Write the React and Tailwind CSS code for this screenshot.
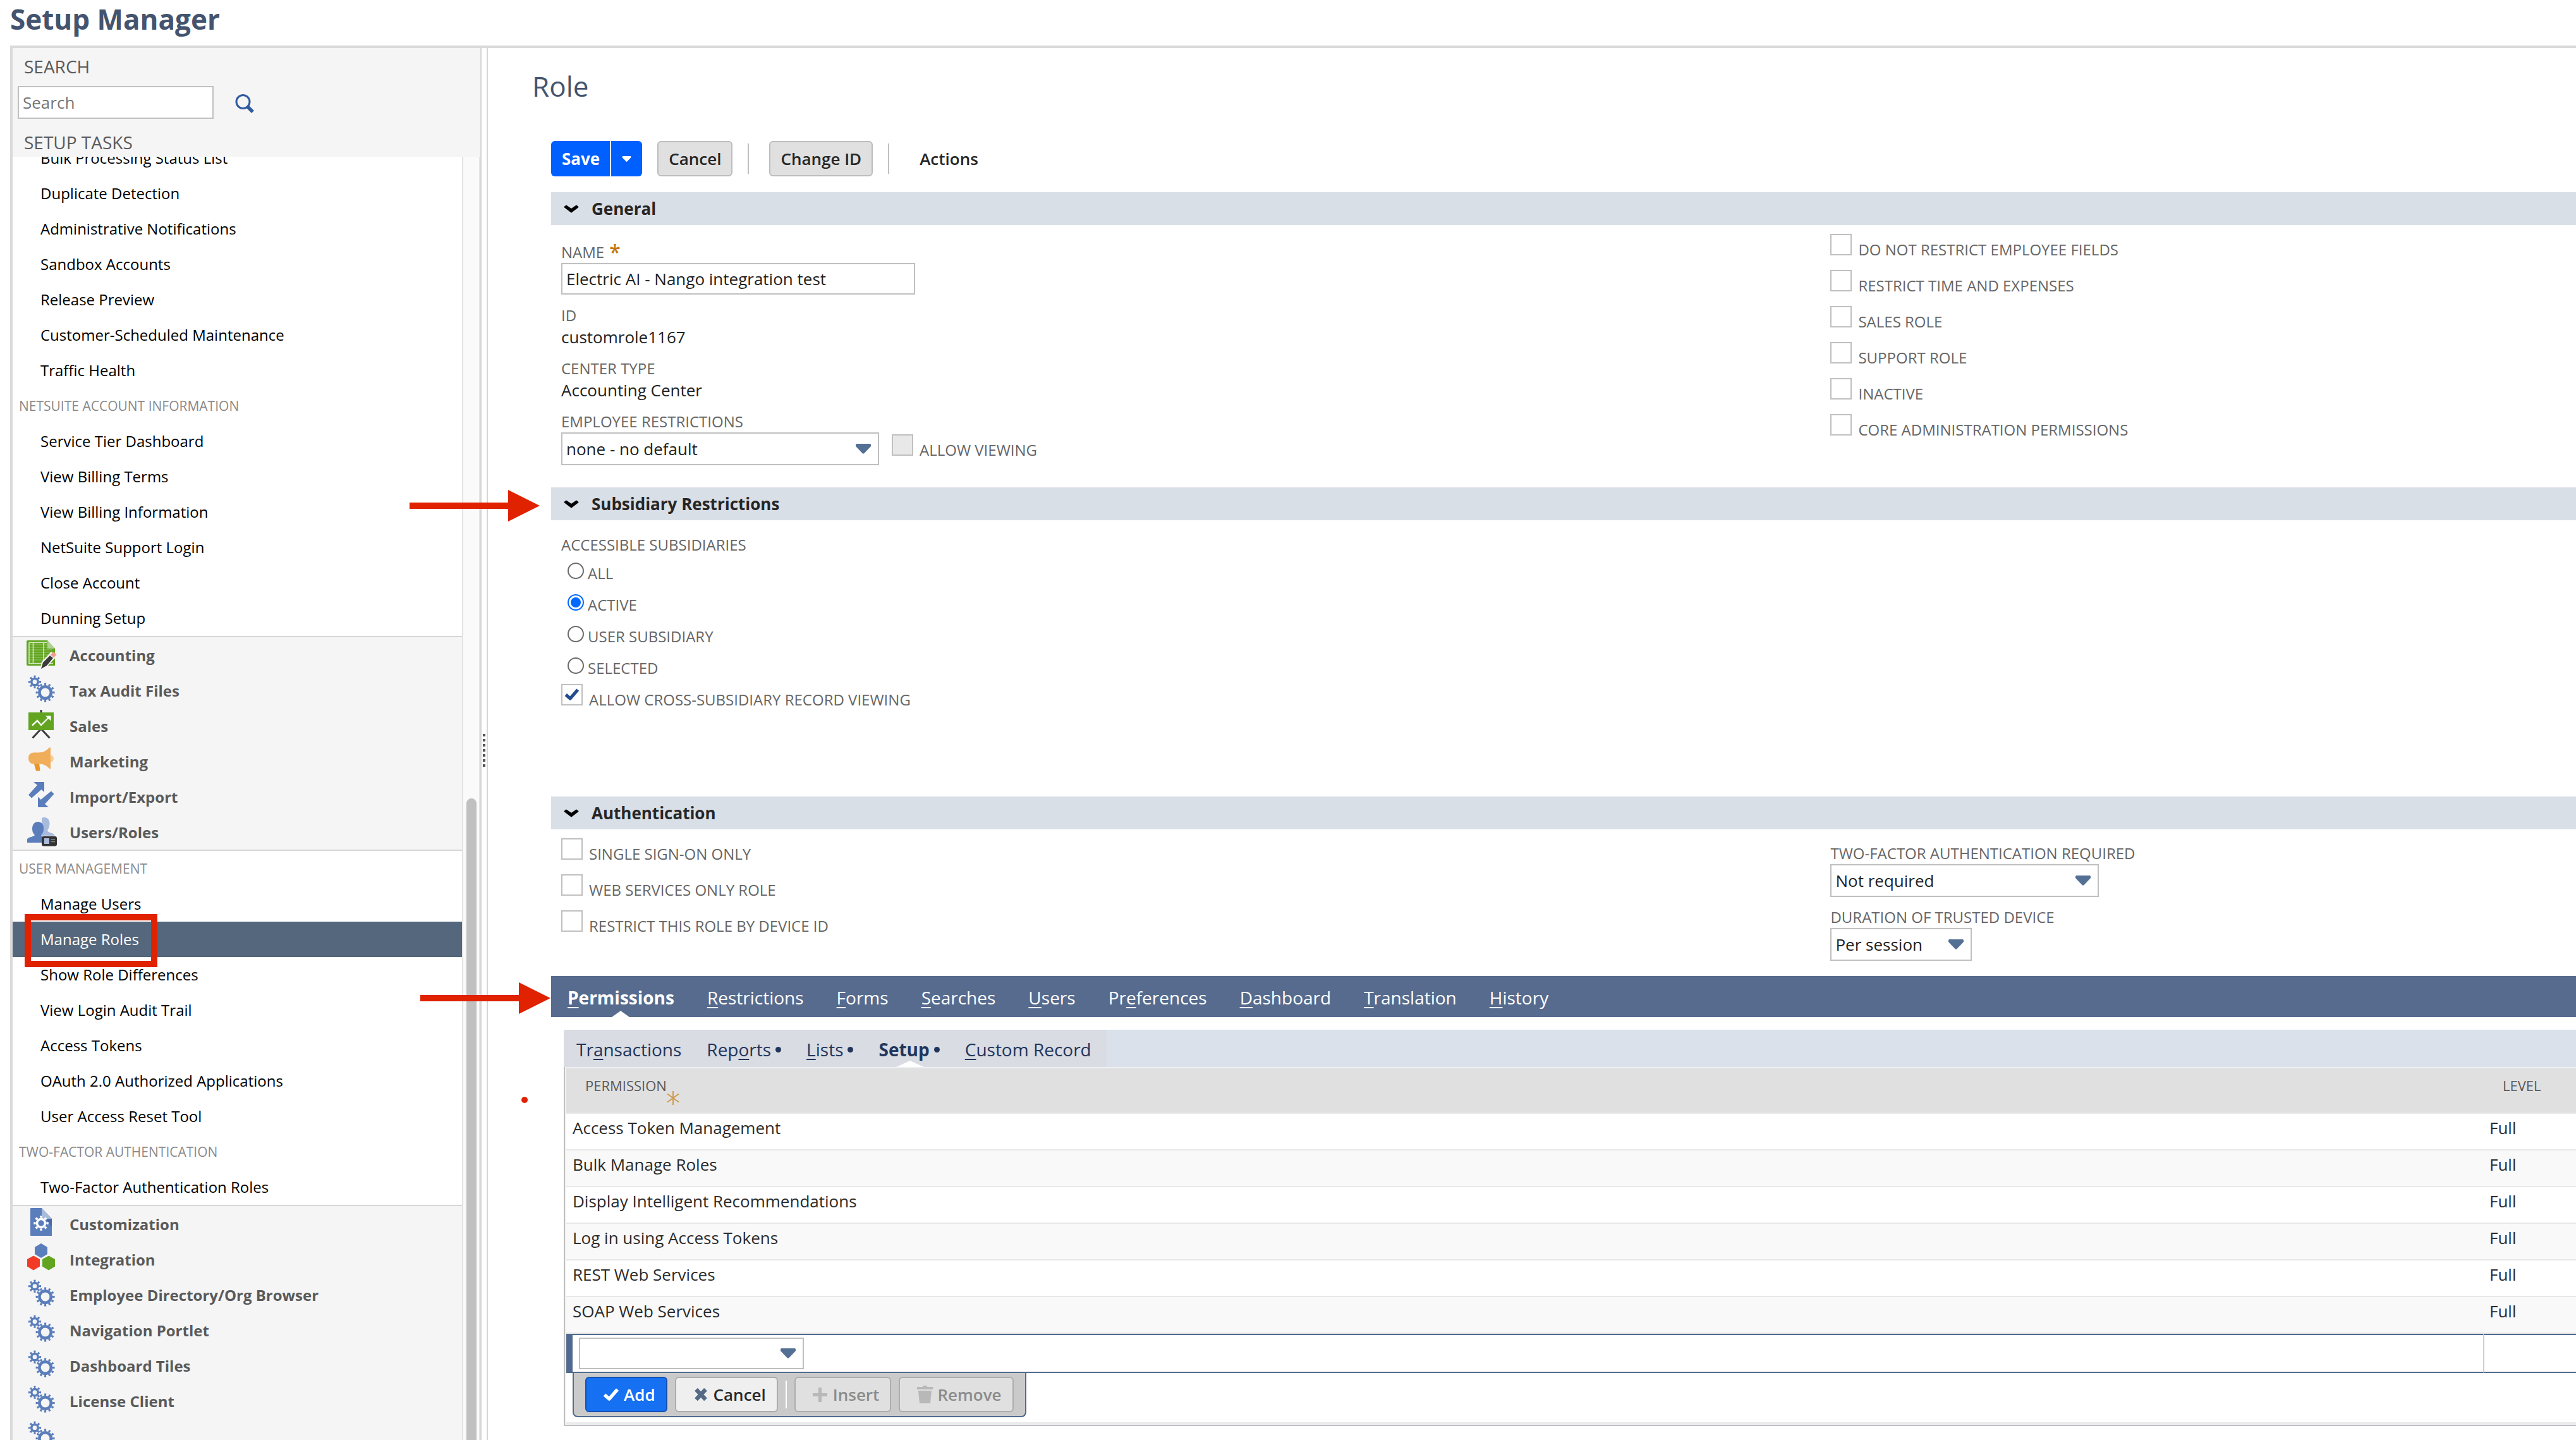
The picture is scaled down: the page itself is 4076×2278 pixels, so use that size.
import { useState } from "react";
import clsx from "clsx";

const accountLinks = [
  "Bulk Processing Status List",
  "Duplicate Detection",
  "Administrative Notifications",
  "Sandbox Accounts",
  "Release Preview",
  "Customer-Scheduled Maintenance",
  "Traffic Health",
];

const netsuiteLinks = [
  "Service Tier Dashboard",
  "View Billing Terms",
  "View Billing Information",
  "NetSuite Support Login",
  "Close Account",
  "Dunning Setup",
];

const userLinks = [
  "Manage Users",
  "Manage Roles",
  "Show Role Differences",
  "View Login Audit Trail",
  "Access Tokens",
  "OAuth 2.0 Authorized Applications",
  "User Access Reset Tool",
];

const mainTabs = [
  ["", "P", "ermissions"],
  ["", "R", "estrictions"],
  ["", "F", "orms"],
  ["", "S", "earches"],
  ["", "U", "sers"],
  ["Pr", "e", "ferences"],
  ["", "D", "ashboard"],
  ["", "T", "ranslation"],
  ["", "H", "istory"],
];

const subTabs = [
  { text: ["Tr", "a", "nsactions"] },
  { text: ["Rep", "o", "rts"], dot: true },
  { text: ["", "L", "ists"], dot: true },
  { text: ["Setup", "", ""], dot: true, active: true },
  { text: ["", "C", "ustom Record"] },
];

const permissions = [
  "Access Token Management",
  "Bulk Manage Roles",
  "Display Intelligent Recommendations",
  "Log in using Access Tokens",
  "REST Web Services",
  "SOAP Web Services",
];

const roleFlags = [
  "DO NOT RESTRICT EMPLOYEE FIELDS",
  "RESTRICT TIME AND EXPENSES",
  "SALES ROLE",
  "SUPPORT ROLE",
  "INACTIVE",
  "CORE ADMINISTRATION PERMISSIONS",
];

/* Sidebar icons */

function GearsIcon() {
  return (
    <svg viewBox="0 0 48 48" className="size-12" fill="none" stroke="#5a7dbb">
      <circle cx="14" cy="12.7" r="5.2" strokeWidth="3.6" />
      <circle
        cx="14"
        cy="12.7"
        r="8.4"
        strokeWidth="3.4"
        pathLength="16"
        strokeDasharray="0.9 1.1"
        strokeDashoffset="0.45"
      />
      <circle cx="30.6" cy="29.5" r="9.2" strokeWidth="4.6" />
      <circle
        cx="30.6"
        cy="29.5"
        r="13.2"
        strokeWidth="3.6"
        pathLength="24"
        strokeDasharray="0.9 1.1"
        strokeDashoffset="0.45"
      />
    </svg>
  );
}

function AccountingIcon() {
  return (
    <svg viewBox="0 0 48 48" className="size-12 overflow-visible" fill="none">
      <path d="M3 3H34L46 16V43H3Q1 43 1 41V5Q1 3 3 3Z" fill="#62a420" />
      <path d="M34 3L46 16H34Z" fill="#b1d290" />
      <path
        d="M5 10H34M5 14H34M5 18H42M5 22H42M5 26H42M5 30H42M5 34H38"
        stroke="#86b955"
        strokeWidth="1.5"
      />
      <path d="M5 6.5H33M5 6.5V39.5H43M11.5 6.5V39.5M28 6.5V39.5" stroke="#d3e6c1" strokeWidth="1.6" />
      <path d="M22.500 49L25 37L40 21L49 28L33 45Z" fill="#f5f5f5" />
      <path d="M24 48L27 38L38 27L43 31L33 43Z" fill="#3b3b3b" />
      <path d="M39 26L43.5 21L48.5 25.5L44 30.5Z" fill="#f79a8b" />
    </svg>
  );
}

function SalesIcon() {
  return (
    <svg viewBox="0 0 48 48" className="size-12" fill="none">
      <path d="M24 1V6M23 32L10.5 45.5M25 32L37.5 45.5" stroke="#3b3b3b" strokeWidth="3" />
      <path d="M4 5H44V33H4Z" fill="#62a420" />
      <path d="M10 25.5L18 18L24 25L36 13" stroke="#fff" strokeWidth="2.4" />
      <path d="M31 10.5H39.5V18.5Z" fill="#fff" />
    </svg>
  );
}

function MarketingIcon() {
  return (
    <svg viewBox="0 0 48 48" className="size-12">
      <path d="M39 16.5Q44 17 44 22T39 27.5Z" fill="#f7cf95" />
      <path d="M12.5 29H21L22.5 41.5H16Z" fill="#e8962a" />
      <path
        d="M12 12.5H20C28 12.5 33 9 37 4.5H39V38H37C33 33 28 30.5 20 30.5H12Q4 30 4 21.5T12 12.5Z"
        fill="#f0ae5a"
      />
    </svg>
  );
}

function ImportExportIcon() {
  return (
    <svg viewBox="0 0 48 48" className="size-12" fill="#5a7dbb">
      <path d="M12 3H29V19L24.5 15L9 28.5L4 23.5L18 8Z" />
      <path d="M19 26.5L23.5 31L40 17.5L44.5 22L30 38L36 43H19Z" />
    </svg>
  );
}

function UsersIcon() {
  return (
    <svg viewBox="0 0 48 48" className="size-12 overflow-visible">
      <path
        d="M29 3C35 3 38 8 37.5 14C37 19 35 22 34 24C35 28 45 27 45.500 32H25V4Q27 3 29 3Z"
        fill="#a8bbdc"
      />
      <path
        d="M19 10C25 10 28.500 15 28 21C28 26 26 29 24.500 31V33L33 35V43H2V38C2 34 13 34 14 31C11 28 10 25 10 21C10 15 13 10 19 10Z"
        fill="#5a7dbb"
      />
      <rect x="25" y="33" width="24" height="15.500" rx="3" fill="#333" />
      <rect x="29" y="36" width="8" height="9" fill="#a8bbdc" />
      <path d="M39.500 38H46M39.500 41.500H46" stroke="#888" strokeWidth="1.500" />
    </svg>
  );
}

function CustomizationIcon() {
  return (
    <svg viewBox="0 0 48 48" className="size-12" fill="none">
      <path d="M8 1H25L41 18V45H8Q7 45 7 44V2Q7 1 8 1Z" fill="#5a7dbb" />
      <path d="M25 1L41 18H25Z" fill="#a8bbdc" />
      <path d="M32 18H41V31Z" fill="#4a69a3" />
      <circle cx="24" cy="25" r="6.500" stroke="#fff" strokeWidth="3.500" />
      <circle
        cx="24"
        cy="25"
        r="10"
        stroke="#fff"
        strokeWidth="3.500"
        pathLength="16"
        strokeDasharray="0.9 1.1"
        strokeDashoffset="0.45"
      />
    </svg>
  );
}

function IntegrationIcon() {
  return (
    <svg viewBox="0 0 48 48" className="size-12">
      <path d="M24 1L34 7V18L24 24L14 18V7Z" fill="#5a7dbb" />
      <path d="M12 20.500L22 26V37.500L12 43.500L2 37.500V26Z" fill="#f23b26" />
      <path d="M36 20.500L46 26V37.500L36 43.500L26 37.500V26Z" fill="#62a420" />
    </svg>
  );
}

function SearchIcon() {
  return (
    <svg viewBox="0 0 30 30" className="size-[30px]" fill="none" stroke="#2f5a9f">
      <ellipse cx="12.500" cy="12" rx="10.500" ry="10.500" strokeWidth="3" />
      <path d="M19 19L28 28" strokeWidth="5.500" />
    </svg>
  );
}

/* Form parts */

function Caret({ className }) {
  return (
    <svg viewBox="0 0 24 16" className={className} fill="currentColor">
      <path d="M1.500 0H22.500Q24 0 24 1.500V4L13.500 15Q12 16.500 10.500 15L0 4V1.500Q0 0 1.500 0Z" />
    </svg>
  );
}

function CheckIcon({ className }) {
  return (
    <svg viewBox="0 0 26 21" className={className} fill="none" stroke="currentColor" strokeWidth="5.500">
      <path d="M2.500 10.500L10 17L23 2" strokeLinejoin="round" />
    </svg>
  );
}

function SelectBox({ id, value, className, label }) {
  return (
    <div className={clsx("relative", className)}>
      <select
        id={id}
        aria-label={label}
        className="block h-full w-full appearance-none border-2 border-[#c0c0c0] bg-white pl-[6px] text-[26px] text-[#222]"
      >
        <option>{value}</option>
      </select>
      <Caret className="pointer-events-none absolute top-1/2 right-[13px] h-4 w-6 -translate-y-1/2 text-[#546f94]" />
    </div>
  );
}

function CheckField({ label, checked = false, disabled = false }) {
  const [on, setOn] = useState(checked);
  return (
    <label className="flex w-fit items-start gap-[10px]">
      <span className="relative block size-[34px]">
        <input
          type="checkbox"
          checked={on}
          disabled={disabled}
          onChange={() => setOn(!on)}
          className="block size-[34px] appearance-none border-2 border-[#c0c0c0] bg-white disabled:bg-[#e8e8e8]"
        />
        {on && (
          <CheckIcon className="pointer-events-none absolute top-[7px] left-[5px] h-5 w-6 text-[#234b8d]" />
        )}
      </span>
      <span className="pt-2 text-2xl/[34px] text-[#666]">{label}</span>
    </label>
  );
}

function Label({ htmlFor, children }) {
  return (
    <label htmlFor={htmlFor} className="flex w-fit text-2xl/[34px] text-[#666]">
      {children}
    </label>
  );
}

function SectionBar({ title }) {
  return (
    <h2>
      <button type="button" className="flex w-full items-center gap-5 bg-[#d9dfe7] pl-5 text-left text-[26px]/[52px] font-bold text-[#262626]">
        <svg viewBox="0 0 24 13" className="h-[13px] w-6">
          <path
            d="M1.500 3.500L4 1.500L12 7L20 1.500L22.500 3.500L12 11.500Z"
            stroke="#000"
            strokeWidth="2"
            strokeLinejoin="round"
          />
        </svg>
        {title}
      </button>
    </h2>
  );
}

function TabText({ parts }) {
  return (
    <span>
      {parts[0]}
      <span className="underline decoration-2 underline-offset-4">{parts[1]}</span>
      {parts[2]}
    </span>
  );
}

/* Sidebar */

function NavHeading({ children }) {
  return <h3 className="pl-[10px] text-[21px]/[56px] text-[#8a8a8a]">{children}</h3>;
}

function NavLink({ children, active }) {
  return (
    <a
      href="#"
      className={clsx(
        "block pl-11 text-2xl/[56px]",
        active ? "bg-[#54677c] text-white" : "text-black"
      )}
    >
      {children}
    </a>
  );
}

function Category({ icon: Icon, children }) {
  return (
    <a href="#" className="flex h-14 items-start gap-[21px] pl-[21px] text-2xl/[58px] font-bold text-[#5a5a5a]">
      <span className="pt-[2px]">
        <Icon />
      </span>
      {children}
    </a>
  );
}

function Sidebar() {
  return (
    <aside className="flex w-[742px] shrink-0 flex-col border-r-2 border-[#d6d6d6]">
      <div className="bg-[#f5f5f5] pt-2 pb-[2px]">
        <h2 className="pl-[18px] text-[28px]/[42px] text-[#5a5a5a]">
          <label htmlFor="setup-search">SEARCH</label>
        </h2>
        <div className="mt-[10px] flex items-center gap-[34px] pl-2">
          <input
            id="setup-search"
            type="text"
            placeholder="Search"
            className="h-[52px] w-[310px] border-2 border-[#c0c0c0] bg-white pl-[6px] text-[26px] placeholder:text-[#757575]"
          />
          <button type="button" aria-label="Search" className="pt-1">
            <SearchIcon />
          </button>
        </div>
        <h2 className="mt-4 pl-[18px] text-[28px]/[42px] text-[#5a5a5a]">SETUP TASKS</h2>
      </div>
      <div className="flex min-h-0 flex-1">
        <nav className="min-w-0 flex-1 overflow-hidden">
          {/* list is scrolled part of a row down */}
          <div className="-mt-[26px]">
            {accountLinks.map((text) => (
              <NavLink key={text}>{text}</NavLink>
            ))}
            <NavHeading>NETSUITE ACCOUNT INFORMATION</NavHeading>
            {netsuiteLinks.map((text) => (
              <NavLink key={text}>{text}</NavLink>
            ))}
          </div>
          <div className="border-y-2 border-[#d6d6d6] bg-[#f5f5f5]">
            <Category icon={AccountingIcon}>Accounting</Category>
            <Category icon={GearsIcon}>Tax Audit Files</Category>
            <Category icon={SalesIcon}>Sales</Category>
            <Category icon={MarketingIcon}>Marketing</Category>
            <Category icon={ImportExportIcon}>Import/Export</Category>
            <Category icon={UsersIcon}>Users/Roles</Category>
          </div>
          <NavHeading>USER MANAGEMENT</NavHeading>
          {userLinks.map((text) => (
            <NavLink key={text} active={text === "Manage Roles"}>
              {text}
            </NavLink>
          ))}
          <NavHeading>TWO-FACTOR AUTHENTICATION</NavHeading>
          <NavLink>Two-Factor Authentication Roles</NavLink>
          <div className="border-t-2 border-[#d6d6d6] bg-[#f5f5f5]">
            <Category icon={CustomizationIcon}>Customization</Category>
            <Category icon={IntegrationIcon}>Integration</Category>
            <Category icon={GearsIcon}>Employee Directory/Org Browser</Category>
            <Category icon={GearsIcon}>Navigation Portlet</Category>
            <Category icon={GearsIcon}>Dashboard Tiles</Category>
            <Category icon={GearsIcon}>License Client</Category>
            <Category icon={GearsIcon} />
          </div>
        </nav>
        {/* scrollbar */}
        <div className="flex w-[29px] flex-col border-x-2 border-[#e4e4e4] bg-[#fafafa] pl-[5px]">
          <div className="h-1/2" />
          <div className="h-1/2 w-4 rounded-t-full bg-[#c0c0c0]" />
        </div>
      </div>
    </aside>
  );
}

/* Role form */

function ActionBar() {
  const gray =
    "rounded-md border-2 border-[#bdbdbd] bg-[#e0e0e0] px-4 text-[26px]/[52px] font-semibold text-[#262626]";
  return (
    <div className="flex items-center">
      <div className="flex overflow-hidden rounded-md bg-[#005fff] text-white">
        <button type="button" className="pr-4 pl-[17px] text-[26px]/[56px] font-bold">
          Save
        </button>
        <button type="button" aria-label="More save options" className="border-l-2 border-white px-4">
          <Caret className="h-[9px] w-[17px]" />
        </button>
      </div>
      <button type="button" className={clsx(gray, "ml-6")}>
        Cancel
      </button>
      <div className="mr-8 ml-6 h-12 w-[2px] bg-[#c0c0c0]" />
      <button type="button" className={gray}>
        Change ID
      </button>
      <div className="mr-12 ml-6 h-12 w-[2px] bg-[#c0c0c0]" />
      <button type="button" className="text-[26px]/[56px] font-semibold text-[#262626]">
        Actions
      </button>
    </div>
  );
}

function GeneralSection() {
  return (
    <section>
      <SectionBar title="General" />
      <div className="grid grid-cols-[63fr_37fr] pb-[35px] pl-4">
        <div className="pt-[26px]">
          <Label htmlFor="role-name">
            NAME
            <span className="h-[34px] pl-2 text-[32px]/[34px] font-semibold text-[#c5770b]">*</span>
          </Label>
          <input
            id="role-name"
            type="text"
            defaultValue="Electric AI - Nango integration test"
            className="block h-[50px] w-[560px] border-2 border-[#c0c0c0] pl-[6px] text-[26px] text-[#222]"
          />
          <dl className="text-[26px]/[34px] text-[#222]">
            <dt className="pt-4 text-2xl/[34px] text-[#666]">ID</dt>
            <dd>customrole1167</dd>
            <dt className="pt-4 text-2xl/[34px] text-[#666]">CENTER TYPE</dt>
            <dd>Accounting Center</dd>
          </dl>
          <div className="pt-4">
            <Label htmlFor="employee-restrictions">EMPLOYEE RESTRICTIONS</Label>
            <div className="flex items-start gap-5">
              <SelectBox
                id="employee-restrictions"
                value="none - no default"
                className="h-[52px] w-[503px]"
              />
              <div className="pt-[3px]">
                <CheckField label="ALLOW VIEWING" disabled />
              </div>
            </div>
          </div>
        </div>
        <div className="space-y-[15px] pt-[14px]">
          {roleFlags.map((flag) => (
            <CheckField key={flag} label={flag} />
          ))}
        </div>
      </div>
    </section>
  );
}

function SubsidiarySection() {
  const [picked, setPicked] = useState("ACTIVE");
  return (
    <section>
      <SectionBar title="Subsidiary Restrictions" />
      <div className="pt-[22px] pb-[136px] pl-4">
        <fieldset>
          <legend className="text-2xl/[34px] text-[#666]">ACCESSIBLE SUBSIDIARIES</legend>
          <div className="space-y-4 pt-[11px] pb-2 pl-[10px]">
            {["ALL", "ACTIVE", "USER SUBSIDIARY", "SELECTED"].map((option) => (
              <label key={option} className="flex w-fit items-start gap-[6px]">
                <input
                  type="radio"
                  name="subsidiaries"
                  checked={picked === option}
                  onChange={() => setPicked(option)}
                  className="size-[26px] appearance-none rounded-full border-2 border-[#6b6b6b] bg-clip-content p-[3px] checked:border-[#0069ff] checked:bg-[#0069ff]"
                />
                <span className="text-2xl/[34px] text-[#666]">{option}</span>
              </label>
            ))}
          </div>
        </fieldset>
        <CheckField label="ALLOW CROSS-SUBSIDIARY RECORD VIEWING" checked />
      </div>
    </section>
  );
}

function AuthenticationSection() {
  return (
    <section>
      <SectionBar title="Authentication" />
      <div className="grid grid-cols-[63fr_37fr] pb-6 pl-4">
        <div className="space-y-[15px] pt-[14px]">
          <CheckField label="SINGLE SIGN-ON ONLY" />
          <CheckField label="WEB SERVICES ONLY ROLE" />
          <CheckField label="RESTRICT THIS ROLE BY DEVICE ID" />
        </div>
        <div className="space-y-[15px] pt-[21px]">
          <div>
            <Label htmlFor="two-factor">TWO-FACTOR AUTHENTICATION REQUIRED</Label>
            <SelectBox id="two-factor" value="Not required" className="h-[52px] w-[425px]" />
          </div>
          <div>
            <Label htmlFor="trusted">DURATION OF TRUSTED DEVICE</Label>
            <SelectBox id="trusted" value="Per session" className="h-[52px] w-[224px]" />
          </div>
        </div>
      </div>
    </section>
  );
}

function RowButton({ icon, children, className, disabled }) {
  return (
    <button
      type="button"
      disabled={disabled}
      className={clsx(
        "flex items-center gap-[5px] rounded-md border-2 pr-[17px] pl-6 text-[26px]/[52px] font-semibold",
        className
      )}
    >
      <span className="flex w-[30px] justify-center">{icon}</span>
      {children}
    </button>
  );
}

function PermissionTable() {
  const off = "border-[#adadad] bg-[#e0e0e0] text-[#8c8c8c]";
  return (
    <div className="border-b-2 border-l-2 border-[#c0c0c0] bg-[#eef0f4] pt-[2px] pb-[2px] pl-[2px]">
      <table className="w-full border-separate border-spacing-0 bg-white text-left text-[26px]/[44px] text-[#2b2b2b]">
        <thead>
          <tr className="bg-[#e0e0e0] text-[22px]/[30px] text-[#5a5a5a]">
            <th className="h-[72px] border-b-2 border-[#e8e8e8] pt-3 pl-[30px] align-top font-normal">
              <span className="flex items-start">
                PERMISSION
                <svg viewBox="0 0 20 22" className="mt-6 h-[22px] w-5" stroke="#d09a4e" strokeWidth="2">
                  <path d="M10 0V22M1 4.500L19 17.500M19 4.500L1 17.500" />
                </svg>
              </span>
            </th>
            <th className="w-[147px] border-b-2 border-[#e8e8e8] pt-3 pl-[31px] align-top font-normal">
              LEVEL
            </th>
          </tr>
        </thead>
        <tbody>
          {permissions.map((name) => (
            <tr key={name} className="even:bg-[#f9f9f9]">
              <td className="h-[58px] border-b-2 border-[#e8e8e8] pl-[10px] align-top">{name}</td>
              <td className="border-b-2 border-[#e8e8e8] pl-[10px] align-top">Full</td>
            </tr>
          ))}
          <tr>
            <td className="border-y-2 border-l-[10px] border-[#526a8f] py-1 pl-[10px]">
              <SelectBox label="Permission" value="" className="h-[50px] w-[356px]" />
            </td>
            <td className="border-y-2 border-l-2 border-y-[#526a8f] border-l-[#d0d0d0]" />
          </tr>
        </tbody>
      </table>
      <div className="border-b-2 border-[#e8e8e8] bg-white pb-2 pl-[10px]">
        <div className="flex w-fit items-center gap-3 rounded-b-lg border-2 border-t-0 border-[#526a8f] bg-[#cacaca] px-[18px] py-[6px]">
          <RowButton
            className="border-[#1551b3] bg-[#1570f2] text-white"
            icon={<CheckIcon className="h-[21px] w-[26px]" />}
          >
            Add
          </RowButton>
          <RowButton
            className="border-[#adadad] bg-[#efefef] text-[#2b2b2b]"
            icon={
              <svg viewBox="0 0 20 20" className="size-5" stroke="#546a85" strokeWidth="6.500">
                <path d="M2.500 2L17.500 18M17.500 2L2.500 18" />
              </svg>
            }
          >
            Cancel
          </RowButton>
          <div className="h-11 w-[2px] bg-white" />
          <RowButton
            disabled
            className={off}
            icon={
              <svg viewBox="0 0 23 23" className="size-[23px]" stroke="#b8b8b8" strokeWidth="5">
                <path d="M11.500 0V23M0 11.500H23" />
              </svg>
            }
          >
            Insert
          </RowButton>
          <RowButton
            disabled
            className={off}
            icon={
              <svg viewBox="0 0 25 28" className="h-7 w-[25px]" fill="#b8b8b8">
                <path d="M9 0H16V2H25V6H0V2H9ZM2 8H23L21 28H4Z" />
              </svg>
            }
          >
            Remove
          </RowButton>
        </div>
      </div>
    </div>
  );
}

function RoleForm() {
  return (
    <main className="min-w-0 flex-1 border-l-2 border-[#d6d6d6] pt-[30px]">
      <h1 className="pl-[70px] text-[44px]/[60px] text-[#44546f]">Role</h1>
      <div className="pt-[57px] pl-[100px]">
        <ActionBar />
        <div className="pt-[25px]">
          <GeneralSection />
          <SubsidiarySection />
          <AuthenticationSection />
        </div>
        <nav className="flex gap-[52px] bg-[#566b8e] pt-1 pb-[1px] pl-[26px] text-[28px]/[60px] text-white">
          {mainTabs.map((parts, i) => (
            <a key={parts.join("")} href="#" className={clsx("relative", i === 0 && "font-bold")}>
              <TabText parts={parts} />
              {i === 0 && (
                <svg viewBox="0 0 28 10" className="absolute -bottom-px left-1/2 h-[10px] w-7 -translate-x-1/2" fill="#fff">
                  <path d="M14 0L28 10H0Z" />
                </svg>
              )}
            </a>
          ))}
        </nav>
        <div className="pt-5 pl-5">
          <nav className="flex bg-[#dbe1eb]">
            <div className="flex gap-10 bg-[#d9dce3] pt-[3px] pr-6 pl-5 text-[28px]/[56px] text-[#22355b]">
              {subTabs.map(({ text, dot, active }) => (
                <a
                  key={text.join("")}
                  href="#"
                  className={clsx("relative flex items-center gap-[7px]", active && "font-bold")}
                >
                  <TabText parts={text} />
                  {dot && <span className="size-[9px] rounded-full bg-[#22355b]" />}
                  {active && (
                    <svg viewBox="0 0 44 10" className="absolute bottom-0 left-7 h-[10px] w-11" fill="#fff">
                      <path d="M22 0L44 10H0Z" />
                    </svg>
                  )}
                </a>
              ))}
            </div>
          </nav>
          <PermissionTable />
        </div>
      </div>
    </main>
  );
}

/* Red annotation arrow */
function Arrow({ className }) {
  return (
    <svg viewBox="0 0 206 50" className={clsx("absolute h-[50px] w-[206px]", className)} fill="#e02200">
      <path d="M0 20H156V0L206 25L156 50V30H0Z" />
    </svg>
  );
}

export default function App() {
  return (
    <div className="relative flex h-screen flex-col overflow-hidden bg-white font-['Open_Sans',sans-serif]">
      <header className="pb-3 pl-4">
        <h1 className="text-[44px]/[60px] font-bold text-[#44546f]">Setup Manager</h1>
      </header>
      <div className="ml-4 flex min-h-0 flex-1 border-t-4 border-l-4 border-[#dadada]">
        <Sidebar />
        {/* splitter with its grip */}
        <div className="flex w-2 shrink-0 flex-col items-center justify-center gap-1 pt-5">
          {[0, 1, 2, 3, 4, 5, 6].map((n) => (
            <span key={n} className="size-1 bg-[#555]" />
          ))}
        </div>
        <RoleForm />
      </div>

      <div className="pointer-events-none absolute top-[1446px] left-[39px] h-[84px] w-[210px] border-[10px] border-[#e02200]" />
      <Arrow className="top-[775px] left-[648px]" />
      <Arrow className="top-[1554px] left-[665px]" />
      <div className="absolute top-[1735px] left-[825px] size-[10px] rounded-full bg-[#e02200]" />
    </div>
  );
}
